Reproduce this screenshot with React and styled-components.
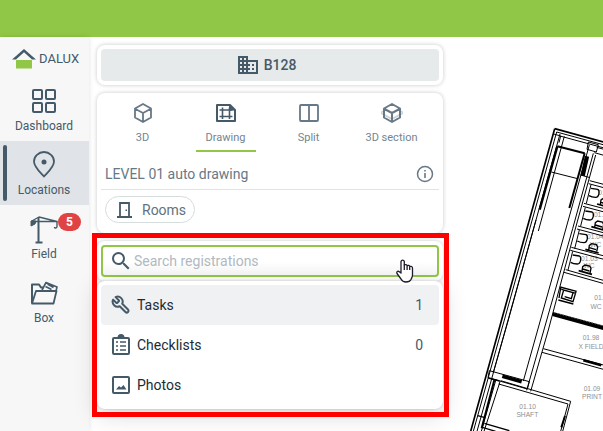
import React from "react";
import styled, { createGlobalStyle } from "styled-components";
import { MdDomain, MdSearch } from "react-icons/md";

const GlobalStyle = createGlobalStyle`
  * { box-sizing: border-box; }
  body {
    margin: 0;
    background: #fff;
    font-family: Roboto, "Liberation Sans", sans-serif;
    font-size: 14px;
    color: #455a69;
  }
  button, input { font: inherit; color: inherit; }
`;

const Page = styled.div`
  min-height: 100vh;
  display: flex;
  flex-direction: column;
  overflow: hidden;
`;

const TopBar = styled.header`
  height: 37px;
  flex: none;
  background: #91c746;
`;

const Body = styled.div`
  flex: 1;
  display: flex;
  align-items: stretch;
`;

const Sidebar = styled.nav`
  flex: none;
  width: 89px;
  background: #f7f7f7;
  box-shadow: 0 0 5px rgba(0, 0, 0, 0.12);
`;

const Logo = styled.a`
  display: flex;
  align-items: center;
  gap: 3px;
  height: 40px;
  padding: 4px 0 0 12px;
  color: #455a69;
  text-decoration: none;
  font-size: 13px;
  line-height: 18px;
`;

const NavItem = styled.button`
  position: relative;
  display: flex;
  flex-direction: column;
  align-items: center;
  width: 100%;
  height: 64px;
  padding: 9px 1px 0 0;
  gap: 1px;
  border: 0;
  background: ${(p) => (p.$active ? "#e0e4e8" : "transparent")};
  font-size: 12px;
  line-height: 16px;

  &::before {
    content: "";
    display: ${(p) => (p.$active ? "block" : "none")};
    position: absolute;
    left: 3px;
    top: 4px;
    bottom: 4px;
    width: 4px;
    border-radius: 2px;
    background: #455a69;
  }
  svg { margin-bottom: 1px; }
`;

const Badge = styled.span`
  position: absolute;
  left: 58px;
  top: 8px;
  width: 23px;
  border-radius: 9px;
  background: #e04343;
  color: #fff;
  font-size: 12px;
  font-weight: 700;
  line-height: 18px;
  text-align: center;
`;

const Panel = styled.main`
  position: relative;
  z-index: 1;
  flex: none;
  width: 360px;
  padding: 8px 6px 8px 8px;
  display: flex;
  flex-direction: column;
  gap: 8px;
`;

const Card = styled.section`
  padding: 4px;
  border-radius: 8px;
  background: #fff;
  box-shadow: ${(p) =>
    p.$raised
      ? "0 0 3px rgba(0,0,0,.2), 0 6px 24px rgba(0,0,0,.16)"
      : "0 0 4px rgba(0,0,0,.22)"};
`;

const BuildingButton = styled.button`
  display: flex;
  align-items: center;
  justify-content: center;
  gap: 4px;
  width: 100%;
  height: 32px;
  padding: 0 8px 0 0;
  border: 0;
  border-radius: 4px;
  background: #e6eaea;
  font-weight: 500;
`;

const Tabs = styled.div`
  display: grid;
  grid-template-columns: repeat(4, 1fr);
  padding-right: 6px;
`;

const Tab = styled.button`
  display: flex;
  flex-direction: column;
  align-items: center;
  justify-self: center;
  width: 60px;
  padding: 5px 0 4px;
  gap: 6px;
  border: 0;
  border-bottom: 2px solid ${(p) => (p.$active ? "#91c746" : "transparent")};
  background: none;
  color: ${(p) => (p.$active ? "#455a69" : "#677886")};
  font-size: 11px;
  line-height: 16px;
  white-space: nowrap;
  svg { height: 22px; }
  span { color: #748490; }
`;

const LevelRow = styled.div`
  display: flex;
  align-items: center;
  justify-content: space-between;
  height: 38px;
  padding: 7px 4px 0;
  border-bottom: 1px solid #dfe3e5;
  color: #677886;
`;

const IconButton = styled.button`
  display: flex;
  padding: 0;
  border: 0;
  background: none;
`;

const ChipRow = styled.div`
  padding: 6px 4px;
`;

const Chip = styled.button`
  display: flex;
  align-items: center;
  gap: 7px;
  height: 27px;
  padding: 0 8px 0 9px;
  border: 1px solid #d5dddd;
  border-radius: 14px;
  background: #fff;
  color: #607280;
`;

const Registrations = styled.div`
  position: relative;
`;

const Highlight = styled.div`
  position: absolute;
  inset: -8px -6px -8px -5px;
  border: 5px solid #f00;
  pointer-events: none;
`;

const SearchField = styled.label`
  display: flex;
  align-items: center;
  gap: 1px;
  height: 32px;
  padding: 0 6px;
  border: 2px solid #91c746;
  border-radius: 4px;
  background: linear-gradient(#fff 50%, #f7f7f7);
  svg { flex: none; }
`;

const SearchInput = styled.input`
  flex: 1;
  min-width: 0;
  padding: 0;
  border: 0;
  outline: 0;
  background: none;
  &::placeholder { color: #b0b9bf; opacity: 1; }
`;

const Pointer = styled.svg`
  position: absolute;
  right: 28px;
  top: 17px;
`;

const List = styled.ul`
  margin: 0;
  padding: 0;
  list-style: none;
`;

const Row = styled.button`
  display: flex;
  align-items: center;
  gap: 6px;
  width: 100%;
  height: 40px;
  padding: 0 16px 0 10px;
  border: 0;
  border-radius: 4px;
  background: ${(p) => (p.$active ? "#eff1f3" : "transparent")};
`;

const RowLabel = styled.span`
  flex: 1;
  text-align: left;
  color: #1c2b36;
`;

const PlanArea = styled.div`
  position: relative;
  flex: 1;
  min-width: 0;
`;

const Plan = styled.svg`
  position: absolute;
  inset: 0;
  width: 100%;
  height: 100%;
`;

const Icon = ({ w = 24, h = 24, box, children, ...rest }) => (
  <svg width={w} height={h} viewBox={box || `0 0 ${w} ${h}`} fill="none" stroke="currentColor" strokeWidth="2" strokeLinejoin="round" aria-hidden="true" {...rest}>
    {children}
  </svg>
);

const HouseLogo = () => (
  <Icon w={24} h={22} stroke="none">
    <path d="M4 12h16v8.500H4z" fill="#91c746" />
    <path d="M0 11.500 12 1l12 10.500h-4L12 4.300l-8 7.200z" fill="#455a69" />
  </Icon>
);

const DashboardIcon = () => (
  <Icon w={30} h={30}>
    <rect x="4" y="4" width="9" height="9" rx="1" />
    <rect x="17" y="4" width="9" height="9" rx="1" />
    <rect x="4" y="17" width="9" height="9" rx="1" />
    <rect x="17" y="17" width="9" height="9" rx="1" />
  </Icon>
);

const PinIcon = () => (
  <Icon w={30} h={30}>
    <path d="M15 26.5C11 22 5 17 5 11.500a10 9.500 0 0 1 20 0C25 17 19 22 15 26.500z" strokeWidth="1.800" />
    <circle cx="15" cy="12" r="2.500" fill="currentColor" stroke="none" />
  </Icon>
);

const CraneIcon = () => (
  <Icon w={30} h={30}>
    <path d="M2 7.500 10 3l18 4.500H2" strokeWidth="1.400" />
    <path d="M2 7h5l-1 3-4 2z" fill="currentColor" strokeWidth="1" />
    <path d="M9.500 4v24M6.500 28.500h7" />
    <path d="M28 7.500v5c0 2-2.500 2-2.500.5" strokeWidth="1.400" />
  </Icon>
);

const BoxIcon = () => (
  <Icon w={30} h={30}>
    <path d="M3 25V6.500h7l2 3h3" />
    <path d="M3 25.500 7 13h20.500L24.500 25.500z" strokeWidth="1.800" />
    <path d="m13 12 4-7.500L28 9l-1 4M16.500 8.500l6 3M18.500 6l6 3.500" strokeWidth="1.600" />
  </Icon>
);

const CubeIcon = () => (
  <Icon w={20} h={22} strokeWidth="1.800">
    <path d="m10 2 8 4.500v9L10 20l-8-4.500v-9zM2.500 7 10 11l7.500-4M10 11v9" />
  </Icon>
);

const DrawingIcon = () => (
  <Icon w={22} h={22}>
    <path d="M2 3h13l5 5v11H2z" />
    <path d="M14 2.500V8.500h6z" fill="currentColor" stroke="none" />
    <path d="M4.500 8h13M4.500 14.500h13M7.500 5.500v11.500M14.500 5.500v11.500" strokeWidth="1.600" />
  </Icon>
);

const SplitIcon = () => (
  <Icon w={22} h={22}>
    <rect x="2" y="3" width="18" height="16" rx="1" strokeWidth="1.800" />
    <path d="M11 3v16" strokeWidth="1.800" />
  </Icon>
);

const SectionIcon = () => (
  <Icon w={22} h={22}>
    <path d="m2 9-2 2 11 6 11-6-2-2" stroke="#cbd1d5" strokeWidth="1.600" />
    <path d="m11 2 8 4.500v9L11 20l-8-4.500v-9zM3.500 7l7.500 4 7.500-4M11 11v9" strokeWidth="2" />
  </Icon>
);

const InfoIcon = () => (
  <Icon w={20} h={20}>
    <circle cx="10" cy="10" r="7.500" strokeWidth="1.500" />
    <path d="M10 9v5M10 6v1.500" strokeWidth="1.600" />
  </Icon>
);

const DoorIcon = () => (
  <Icon w={20} h={20} stroke="#455a69" strokeLinejoin="miter">
    <path d="M5 17V3h9v14M2 17h15" strokeWidth="1.800" />
    <path d="M10.500 9.500H12V11h-1.500z" fill="#455a69" stroke="none" />
  </Icon>
);

const WrenchIcon = () => (
  <Icon w={20} h={20} box="0 0 24 24" strokeWidth="2.400">
    <path
      transform="matrix(-1 0 0 1 24 0)"
      d="M14.700 6.300a1 1 0 0 0 0 1.400l1.600 1.600a1 1 0 0 0 1.400 0l3.770-3.770a6 6 0 0 1-7.940 7.940l-6.910 6.910a2.120 2.120 0 0 1-3-3l6.910-6.910a6 6 0 0 1 7.940-7.940z"
    />
  </Icon>
);

const ChecklistIcon = () => (
  <Icon w={20} h={22} strokeLinejoin="miter">
    <rect x="2" y="4" width="16" height="16" rx="1" />
    <path d="M6.500 3.500a3.500 3.500 0 0 1 7 0z" fill="currentColor" stroke="none" />
    <path d="M5 8h2M9 8h6M5 12h2M9 12h6M5 16h2M9 16h6" strokeWidth="1.600" />
  </Icon>
);

const PhotoIcon = () => (
  <Icon w={20} h={20}>
    <rect x="2" y="2" width="16" height="16" rx="1" />
    <path d="m5 14.500 3-3.500 2 1.500 2.500-2.500 3 4.500z" fill="currentColor" stroke="none" />
  </Icon>
);

const HandPointer = () => (
  <Pointer width="20" height="26" viewBox="0 0 20 26" fill="#fff" stroke="#1c1c2c" strokeWidth="1.300" strokeLinejoin="round" aria-hidden="true">
    <path d="M6 15V3.500a1.700 1.700 0 0 1 3.300 0V7c1-.8 2.500-.4 2.800.7 1-.7 2.300-.2 2.600.8 1.400-.6 2.800.2 2.800 1.700V17c0 2-1 3.200-1.500 4.500-1 2-2.500 2.500-5 2.500s-4-1-5-3L2 15.500c-.8-1.600.8-3 2.300-1.800z" />
    <path d="M9.300 6.500V12M12.100 8v4M14.700 9v3" fill="none" />
  </Pointer>
);

/* One stall with its basin and toilet; x and y are the stall's top-left corner. */
const Stall = ({ x, y }) => (
  <g transform={`translate(${x} ${y})`} fill="none" stroke="#000" strokeWidth="3">
    <path d="M0 0 110 29M-3 9 105 38" />
    <path d="m4 12-14 56" />
    <path d="m4 23 20 3q5 2 4 12-2 12-10 12-12 0-20-5" strokeWidth="4" />
    <path d="m22 70 40 11" strokeWidth="5" />
    <path d="m32 72 2-14 7-5 14 3 4 7-3 14M34 65l20 6" strokeWidth="4" />
  </g>
);

const FloorPlan = () => (
  <Plan viewBox="27 -249 462 1182" preserveAspectRatio="xMinYMin slice" role="img" aria-label="Level 01 floor plan">
    <g fill="#909090" fontFamily="Liberation Sans, sans-serif" fontSize="20" textAnchor="middle">
      <text x="500" y="224">01.12</text>
      <text x="486" y="291">01.11</text>
      <text x="466" y="356">01.04</text>
      <text x="467" y="381">WC</text>
      <text x="448" y="422">01.03</text>
      <text x="447" y="444">WC</text>
      <text x="488" y="541">01.02</text>
      <text x="468" y="566">WC</text>
      <text x="453" y="661">01.98</text>
      <text x="453" y="686">X FIELD</text>
      <text x="456" y="812">01.09</text>
      <text x="456" y="837">PRINT</text>
      <text x="263" y="867">01.10</text>
      <text x="262" y="892">SHAFT</text>
    </g>
    <g fill="none" stroke="#000" strokeWidth="3">
      <path d="M344 26 92 934M344 26 900 178" strokeWidth="5" />
      <path d="M350 36 100 934M360 42 111 934M350 36 900 186M360 48 900 195" />
      <path d="m373 49-78 284M288 300l-83 300-45 157" />
      <path d="m341 42 21 6-5 20M445 66l30 8-6 22-28-8zM470 82l90 25M463 98l100 28" />
      <path d="m352 79 82 21" strokeWidth="6" />
      <path d="m352 79-53 190" strokeWidth="7" />
      <path d="m434 100-46 164" strokeWidth="6" />
      <path d="M334 156 413 176" />
      <path d="m441 109-13 58" strokeWidth="13" />
      <path d="m448 75-63 225-92 330-43 153M460 100l-62 226-88 310-50 175M467 105l-62 225-80 300-53 184" />
      <path d="m422 165 28 8" />

      <path d="m338 582 250 68" strokeWidth="13" />
      <path d="m342 578 248 67" stroke="#777" strokeWidth="2" strokeDasharray="4 5" />
      <path d="m310 686 180 49M306 697l184 51" />
      <path d="m430 721 54 15" strokeWidth="8" />

      <path d="m148 752 120 33-6 22-118-34z" />
      <path d="m187 769 58 16" strokeWidth="11" />
      <path d="m182 782 210 62-24 90M176 792l208 60-22 82M180 785l-48 149M168 778l-44 156" />
      <path d="m163 780-38 145" strokeWidth="6" />
      <path d="m145 774 34 9M113 887l22 6M133 910l75 22M127 922l40 12" strokeWidth="4" />
      <path d="m375 888-11 34" strokeWidth="6" />

      <path d="m360 501 50 13M364 508l44 12M362 504l-5 30M408 515l-9 30-35-11 7-24 28 8-5 18-20-6M355 540l45 12" strokeWidth="4" />
    </g>
    <Stall x={449} y={182} />
    <Stall x={432} y={250} />
    <Stall x={414} y={318} />
    <Stall x={394} y={382} />
    <path d="m377 449 120 34M372 457l120 34" stroke="#000" strokeWidth="3" />
  </Plan>
);

const navItems = [
  { label: "Dashboard", icon: <DashboardIcon /> },
  { label: "Locations", icon: <PinIcon />, active: true },
  { label: "Field", icon: <CraneIcon />, badge: 5 },
  { label: "Box", icon: <BoxIcon /> },
];

const tabs = [
  { label: "3D", icon: <CubeIcon /> },
  { label: "Drawing", icon: <DrawingIcon />, active: true },
  { label: "Split", icon: <SplitIcon /> },
  { label: "3D section", icon: <SectionIcon /> },
];

const rows = [
  { label: "Tasks", icon: <WrenchIcon />, count: 1, active: true },
  { label: "Checklists", icon: <ChecklistIcon />, count: 0 },
  { label: "Photos", icon: <PhotoIcon /> },
];

export default function App() {
  return (
    <Page>
      <GlobalStyle />
      <TopBar />
      <Body>
        <Sidebar>
          <Logo href="#">
            <HouseLogo />
            DALUX
          </Logo>
          {navItems.map((n) => (
            <NavItem key={n.label} $active={n.active}>
              {n.icon}
              {n.label}
              {n.badge && <Badge>{n.badge}</Badge>}
            </NavItem>
          ))}
        </Sidebar>
        <Panel>
          <Card>
            <BuildingButton>
              <MdDomain size={24} />
              B128
            </BuildingButton>
          </Card>
          <Card>
            <Tabs role="tablist">
              {tabs.map((t) => (
                <Tab key={t.label} role="tab" aria-selected={!!t.active} $active={t.active}>
                  {t.icon}
                  <span>{t.label}</span>
                </Tab>
              ))}
            </Tabs>
            <LevelRow>
              LEVEL 01 auto drawing
              <IconButton aria-label="Level information">
                <InfoIcon />
              </IconButton>
            </LevelRow>
            <ChipRow>
              <Chip>
                <DoorIcon />
                Rooms
              </Chip>
            </ChipRow>
          </Card>
          <Registrations>
            <Card>
              <SearchField>
                <MdSearch size={24} />
                <SearchInput type="text" aria-label="Search registrations" placeholder="Search registrations" />
              </SearchField>
            </Card>
            <Card $raised>
              <List>
                {rows.map((r) => (
                  <li key={r.label}>
                    <Row $active={r.active}>
                      {r.icon}
                      <RowLabel>{r.label}</RowLabel>
                      {r.count}
                    </Row>
                  </li>
                ))}
              </List>
            </Card>
            <HandPointer />
            <Highlight />
          </Registrations>
        </Panel>
        <PlanArea>
          <FloorPlan />
        </PlanArea>
      </Body>
    </Page>
  );
}
